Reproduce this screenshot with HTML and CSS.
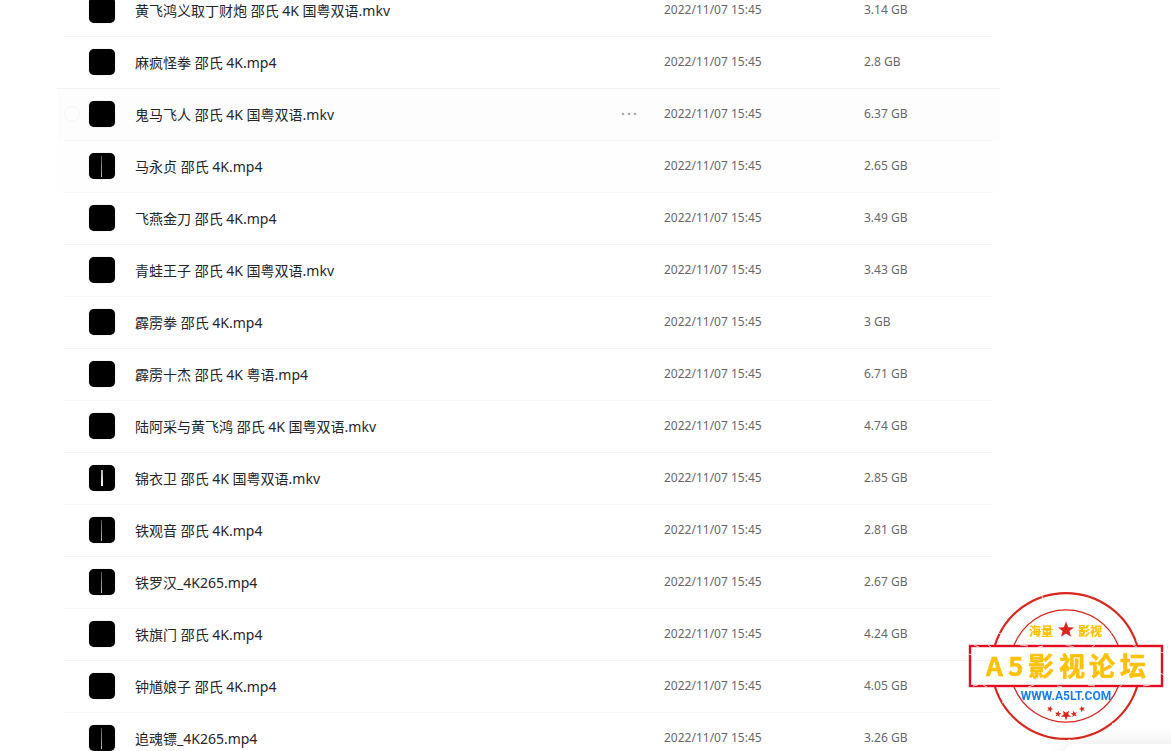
FILE: index.html
```html
<!DOCTYPE html>
<html lang="zh-CN">
<head>
  <meta charset="UTF-8" />
  <meta name="viewport" content="width=device-width, initial-scale=1.0" />
  <title>文件列表</title>
  <link rel="stylesheet" href="styles.css">
</head>
<body>
  <main class="files">
    <table class="file-table">
      <colgroup>
        <col class="col-check">
        <col class="col-thumb">
        <col>
        <col class="col-more">
        <col class="col-date">
        <col class="col-size">
      </colgroup>
      <tbody>
        <tr><td></td><td><div class="thumb"></div></td><td class="name">黄飞鸿义取丁财炮 邵氏 4K 国粤双语.mkv</td><td></td><td class="meta">2022/11/07 15:45</td><td class="meta">3.14 GB</td></tr>
        <tr><td></td><td><div class="thumb"></div></td><td class="name">麻疯怪拳 邵氏 4K.mp4</td><td></td><td class="meta">2022/11/07 15:45</td><td class="meta">2.8 GB</td></tr>
        <tr class="active">
          <td><input type="checkbox" class="check" aria-labelledby="file-3"></td>
          <td><div class="thumb"></div></td>
          <td class="name" id="file-3">鬼马飞人 邵氏 4K 国粤双语.mkv</td>
          <td>
            <button class="more" aria-label="更多">
              <svg width="16" height="4" viewBox="0 0 16 4"><circle cx="2" cy="2" r="1.3"/><circle cx="8" cy="2" r="1.3"/><circle cx="14" cy="2" r="1.3"/></svg>
            </button>
          </td>
          <td class="meta">2022/11/07 15:45</td>
          <td class="meta">6.37 GB</td>
        </tr>
        <tr class="fading"><td></td><td><div class="thumb slit"></div></td><td class="name">马永贞 邵氏 4K.mp4</td><td></td><td class="meta">2022/11/07 15:45</td><td class="meta">2.65 GB</td></tr>
        <tr><td></td><td><div class="thumb"></div></td><td class="name">飞燕金刀 邵氏 4K.mp4</td><td></td><td class="meta">2022/11/07 15:45</td><td class="meta">3.49 GB</td></tr>
        <tr><td></td><td><div class="thumb"></div></td><td class="name">青蛙王子 邵氏 4K 国粤双语.mkv</td><td></td><td class="meta">2022/11/07 15:45</td><td class="meta">3.43 GB</td></tr>
        <tr><td></td><td><div class="thumb"></div></td><td class="name">霹雳拳 邵氏 4K.mp4</td><td></td><td class="meta">2022/11/07 15:45</td><td class="meta">3 GB</td></tr>
        <tr><td></td><td><div class="thumb"></div></td><td class="name">霹雳十杰 邵氏 4K 粤语.mp4</td><td></td><td class="meta">2022/11/07 15:45</td><td class="meta">6.71 GB</td></tr>
        <tr><td></td><td><div class="thumb"></div></td><td class="name">陆阿采与黄飞鸿 邵氏 4K 国粤双语.mkv</td><td></td><td class="meta">2022/11/07 15:45</td><td class="meta">4.74 GB</td></tr>
        <tr><td></td><td><div class="thumb slit wide"></div></td><td class="name">锦衣卫 邵氏 4K 国粤双语.mkv</td><td></td><td class="meta">2022/11/07 15:45</td><td class="meta">2.85 GB</td></tr>
        <tr><td></td><td><div class="thumb slit"></div></td><td class="name">铁观音 邵氏 4K.mp4</td><td></td><td class="meta">2022/11/07 15:45</td><td class="meta">2.81 GB</td></tr>
        <tr><td></td><td><div class="thumb slit"></div></td><td class="name">铁罗汉_4K265.mp4</td><td></td><td class="meta">2022/11/07 15:45</td><td class="meta">2.67 GB</td></tr>
        <tr><td></td><td><div class="thumb"></div></td><td class="name">铁旗门 邵氏 4K.mp4</td><td></td><td class="meta">2022/11/07 15:45</td><td class="meta">4.24 GB</td></tr>
        <tr><td></td><td><div class="thumb"></div></td><td class="name">钟馗娘子 邵氏 4K.mp4</td><td></td><td class="meta">2022/11/07 15:45</td><td class="meta">4.05 GB</td></tr>
        <tr><td></td><td><div class="thumb slit"></div></td><td class="name">追魂镖_4K265.mp4</td><td></td><td class="meta">2022/11/07 15:45</td><td class="meta">3.26 GB</td></tr>
      </tbody>
    </table>
  </main>

  <div class="panel"></div>

  <!-- Forum stamp -->
  <svg class="stamp" width="196" height="154" viewBox="0 0 196 154">
    <defs>
      <polygon id="star" points="0,-10 2.6,-3.4 9.5,-3.1 4.1,1.3 5.9,8.1 0,4.2 -5.9,8.1 -4.1,1.3 -9.5,-3.1 -2.6,-3.4"/>
    </defs>
    <g class="ring">
      <path stroke-width="2.2" d="M27 56A74.5 74.5 0 0 1 169 56M27 98A74.5 74.5 0 0 0 169 98"/>
      <path stroke-width="1.3" d="M46 56A56 56 0 0 1 150 56M46 98A56 56 0 0 0 150 98"/>
    </g>
    <rect class="frame" x="2" y="57" width="192" height="40"/>
    <g class="scratch">
      <path d="M29 43l4 2M72 5l3 4M157 29l4-3M168 52l5-2M34 114l5-3M80 149l-1 5M101 150l1 4M144 134l4 4M55 42l3 2M142 45l3-2"/>
      <path d="M1 65l3 1M6 56l5 2M20 56l3 2M52 56l8 1M70 58l5-1M98 56l8 2M124 58l3-2M165 56l4 2M193 63l3 1M192 84l4 2M5 97l5-1M15 96l4 2M60 98l6-2M89 97l5 1M120 96l7 1M151 98l3-2M175 97l7-1"/>
    </g>
    <g class="stars">
      <use href="#star" transform="translate(98 41) scale(.84)"/>
      <use href="#star" transform="translate(82 120) rotate(20) scale(.33)"/>
      <use href="#star" transform="translate(90 125) rotate(10) scale(.34)"/>
      <use href="#star" transform="translate(98 126) rotate(36) scale(.54)"/>
      <use href="#star" transform="translate(106 125) rotate(-10) scale(.34)"/>
      <use href="#star" transform="translate(114 120) rotate(-20) scale(.33)"/>
    </g>
    <text class="tag" x="61" y="47">海量</text>
    <text class="tag" x="110" y="47">影视</text>
    <text class="title" x="18 40 60 91 121 152" y="87">A5影视论坛</text>
    <text class="site" x="98" y="111">WWW.A5LT.COM</text>
  </svg>
</body>
</html>
```

FILE: styles.css
```css
:root {
  --line: #f4f4f5;
  --red: #d8261c;
  --yellow: #ffc107;
}
* { box-sizing: border-box; }
body {
  margin: 0;
  height: 100vh;
  overflow: hidden;
  background: #fff;
  color: #25262b;
  font-family: "Noto Sans", "Noto Sans CJK SC", sans-serif;
}

/* File list, scrolled part way into the first row */
.files {
  margin: -15px 179px 0 64px;
}
.file-table {
  width: 100%;
  table-layout: fixed;
  border-collapse: separate;
  border-spacing: 0;
}
.col-check { width: 25px; }
.col-thumb { width: 46px; }
.col-more { width: 43px; }
.col-date { width: 200px; }
.col-size { width: 128px; }

td {
  height: 52px;
  padding: 0 0 1px;
  border-bottom: 1px solid var(--line);
  vertical-align: middle;
  white-space: nowrap;
}
.name {
  padding-top: 1px;
  font-size: 14px;
  line-height: 20px;
  overflow: hidden;
  text-overflow: ellipsis;
}
.meta {
  font-size: 12px;
  line-height: 18px;
  color: #66676b;
}

.active { background: #fdfdfd; box-shadow: -7px 0 #fdfdfd, 8px 0 #fdfdfd, -7px -1px var(--line), 8px -1px var(--line); }
.fading { background: #fefefe; box-shadow: -7px 0 #fefefe, 8px 0 #fefefe; }

.thumb {
  width: 26px;
  height: 26px;
  border-radius: 5px;
  background: #000;
  box-shadow: 0 0 1px #999;
}
.slit { background: linear-gradient(#555, #c8bcb0) 12px 3px / 1px 21px no-repeat #000; }
.slit.wide { background: linear-gradient(#baa, #fff) 12px 5px / 2px 16px no-repeat #000; }

.check {
  appearance: none;
  display: block;
  width: 16px;
  height: 16px;
  margin: 0;
  border: 1px solid #f7f7f7;
  border-radius: 50%;
}
.more {
  display: block;
  padding: 0;
  border: 0;
  background: none;
  cursor: pointer;
}
.more svg { display: block; fill: #aaabae; }

/* Floating panel peeking in at the bottom */
.panel {
  position: fixed;
  right: -20px;
  bottom: -33px;
  width: 127px;
  height: 40px;
  border-radius: 10px;
  background: #fff;
  box-shadow: 0 0 20px rgba(0, 0, 0, 0.1);
}

/* Stamp */
.stamp {
  position: fixed;
  right: 7px;
  bottom: 8px;
}
.ring { fill: none; stroke: var(--red); }
.frame { fill: none; stroke: #e50a22; stroke-width: 2.4; }
.scratch { fill: none; stroke: #fff; stroke-width: 0.8; }
.stars { fill: var(--red); }
.stamp text { font-family: "Noto Sans CJK SC", sans-serif; font-weight: 700; }
.stamp .tag { font-size: 12px; font-weight: 900; fill: var(--yellow); }
.stamp .title {
  font-size: 26px;
  fill: var(--yellow);
  stroke: var(--yellow);
  stroke-width: 0.6;
  stroke-linejoin: round;
}
.stamp .site {
  font-family: Roboto, "Liberation Sans", sans-serif;
  font-size: 12px;
  fill: #1c7ff0;
  text-anchor: middle;
}
```
